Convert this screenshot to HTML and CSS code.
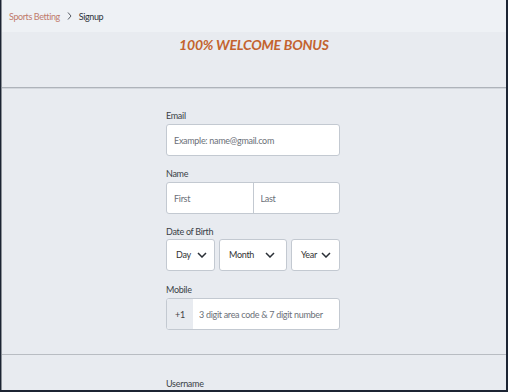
FILE: index.html
```html
<!DOCTYPE html>
<html lang="en">
<head>
    <meta charset="UTF-8">
    <meta name="viewport" content="width=device-width, initial-scale=1.0">
    <title>Signup</title>
    <link rel="stylesheet" href="styles.css">
</head>
<body>
    <div class="frame">
        <div class="crumbs">
            <a class="crumbs_link" href="#">Sports Betting</a>
            <svg class="crumbs_sep" viewBox="0 0 5 8"><path d="M1 0.5l3 3.5-3 3.5"/></svg>
            <span class="crumbs_current">Signup</span>
        </div>

        <div class="banner">
            <h1 class="banner_title">100% WELCOME BONUS</h1>
        </div>

        <form class="form">
            <div class="field">
                <label class="field_label">Email</label>
                <div class="box">
                    <input class="box_input" type="text" placeholder="Example: name@gmail.com">
                </div>
            </div>

            <div class="field">
                <label class="field_label">Name</label>
                <div class="box">
                    <input class="box_input" type="text" placeholder="First">
                    <input class="box_input box_input-split" type="text" placeholder="Last">
                </div>
            </div>

            <div class="field">
                <label class="field_label">Date of Birth</label>
                <div class="dob">
                    <div class="select select-day">
                        <span>Day</span>
                        <svg class="chev" viewBox="0 0 10 6"><path d="M1 1l4 4 4-4"/></svg>
                    </div>
                    <div class="select select-month">
                        <span>Month</span>
                        <svg class="chev" viewBox="0 0 10 6"><path d="M1 1l4 4 4-4"/></svg>
                    </div>
                    <div class="select select-year">
                        <span>Year</span>
                        <svg class="chev" viewBox="0 0 10 6"><path d="M1 1l4 4 4-4"/></svg>
                    </div>
                </div>
            </div>

            <div class="field">
                <label class="field_label">Mobile</label>
                <div class="box">
                    <span class="box_prefix">+1</span>
                    <input class="box_input" type="text" placeholder="3 digit area code &amp; 7 digit number">
                </div>
            </div>
        </form>

        <div class="next">
            <div class="form form-next">
                <div class="field">
                    <label class="field_label">Username</label>
                    <div class="box"></div>
                </div>
            </div>
        </div>
    </div>
</body>
</html>
```

FILE: styles.css
```css
html, body {
    margin: 0;
    height: 100%;
    overflow: hidden;
}

body {
    font-family: Lato, "Liberation Sans", sans-serif;
    background-color: #1c2433;
    color: #333a44;
}

.frame {
    height: 390px;
    width: 504px;
    margin-left: 1px;
    background-color: #e8ebf0;
    border-left: 1px solid #8a8f96;
    overflow: hidden;
}

.crumbs {
    height: 32px;
    display: flex;
    align-items: center;
    padding-left: 7px;
    background-color: #eef1f5;
    font-size: 9px;
    letter-spacing: -0.4px;
}

.crumbs_link {
    color: #c07a6c;
    text-decoration: none;
}

.crumbs_sep {
    width: 5px;
    height: 8px;
    margin: 0 7px 0 7px;
    fill: none;
    stroke: #555b63;
    stroke-width: 1;
}

.crumbs_current {
    color: #2e333a;
}

.banner {
    height: 55px;
    border-bottom: 1px solid #aeb3ba;
    box-shadow: 0 1px 0 #d3d7dd;
}

.banner_title {
    margin: 0;
    padding-top: 4px;
    text-align: center;
    font-size: 14px;
    font-style: italic;
    font-weight: bold;
    letter-spacing: -0.2px;
    color: #c3632f;
}

.form {
    width: 174px;
    margin: 22px 0 0 164px;
    padding-bottom: 24px;
    display: flex;
    flex-direction: column;
    gap: 12px;
    letter-spacing: -0.3px;
}

.next {
    border-top: 1px solid #b8bcc2;
}

.form-next {
    margin-top: 23px;
}

.field_label {
    display: block;
    font-size: 9px;
    margin-bottom: 3px;
    color: #3a3f47;
}

.box {
    display: flex;
    height: 30px;
    background: #fff;
    border: 1px solid #c3c9d1;
    border-radius: 3px;
    overflow: hidden;
}

.box_input {
    flex: 1;
    min-width: 0;
    border: none;
    outline: none;
    padding: 0 7px;
    font-family: inherit;
    font-size: 9px;
    letter-spacing: -0.3px;
    color: #333;
    background: transparent;
}

.box_input::placeholder {
    color: #6b7078;
}

.box_input-split {
    border-left: 1px solid #c3c9d1;
}

.box_prefix {
    width: 26px;
    display: flex;
    align-items: center;
    justify-content: center;
    background: #e8ebf0;
    font-size: 9px;
    color: #444;
}

.box_prefix + .box_input {
    padding-left: 6px;
}

.dob {
    display: flex;
    gap: 4px;
    margin-top: -1px;
    margin-bottom: 1px;
}

.select {
    height: 30px;
    display: flex;
    align-items: center;
    justify-content: space-between;
    padding: 0 7px 0 9px;
    background: #fff;
    border: 1px solid #c3c9d1;
    border-radius: 3px;
    font-size: 9px;
    color: #333;
}

.select span {
    margin-top: -2px;
}

.select-day {
    width: 31px;
}

.select-month {
    width: 46px;
    padding-right: 11px;
}

.select-year {
    width: 30px;
    padding-right: 8px;
}

.chev {
    width: 10px;
    height: 6px;
    fill: none;
    stroke: #2a2f36;
    stroke-width: 1.5;
}
```
